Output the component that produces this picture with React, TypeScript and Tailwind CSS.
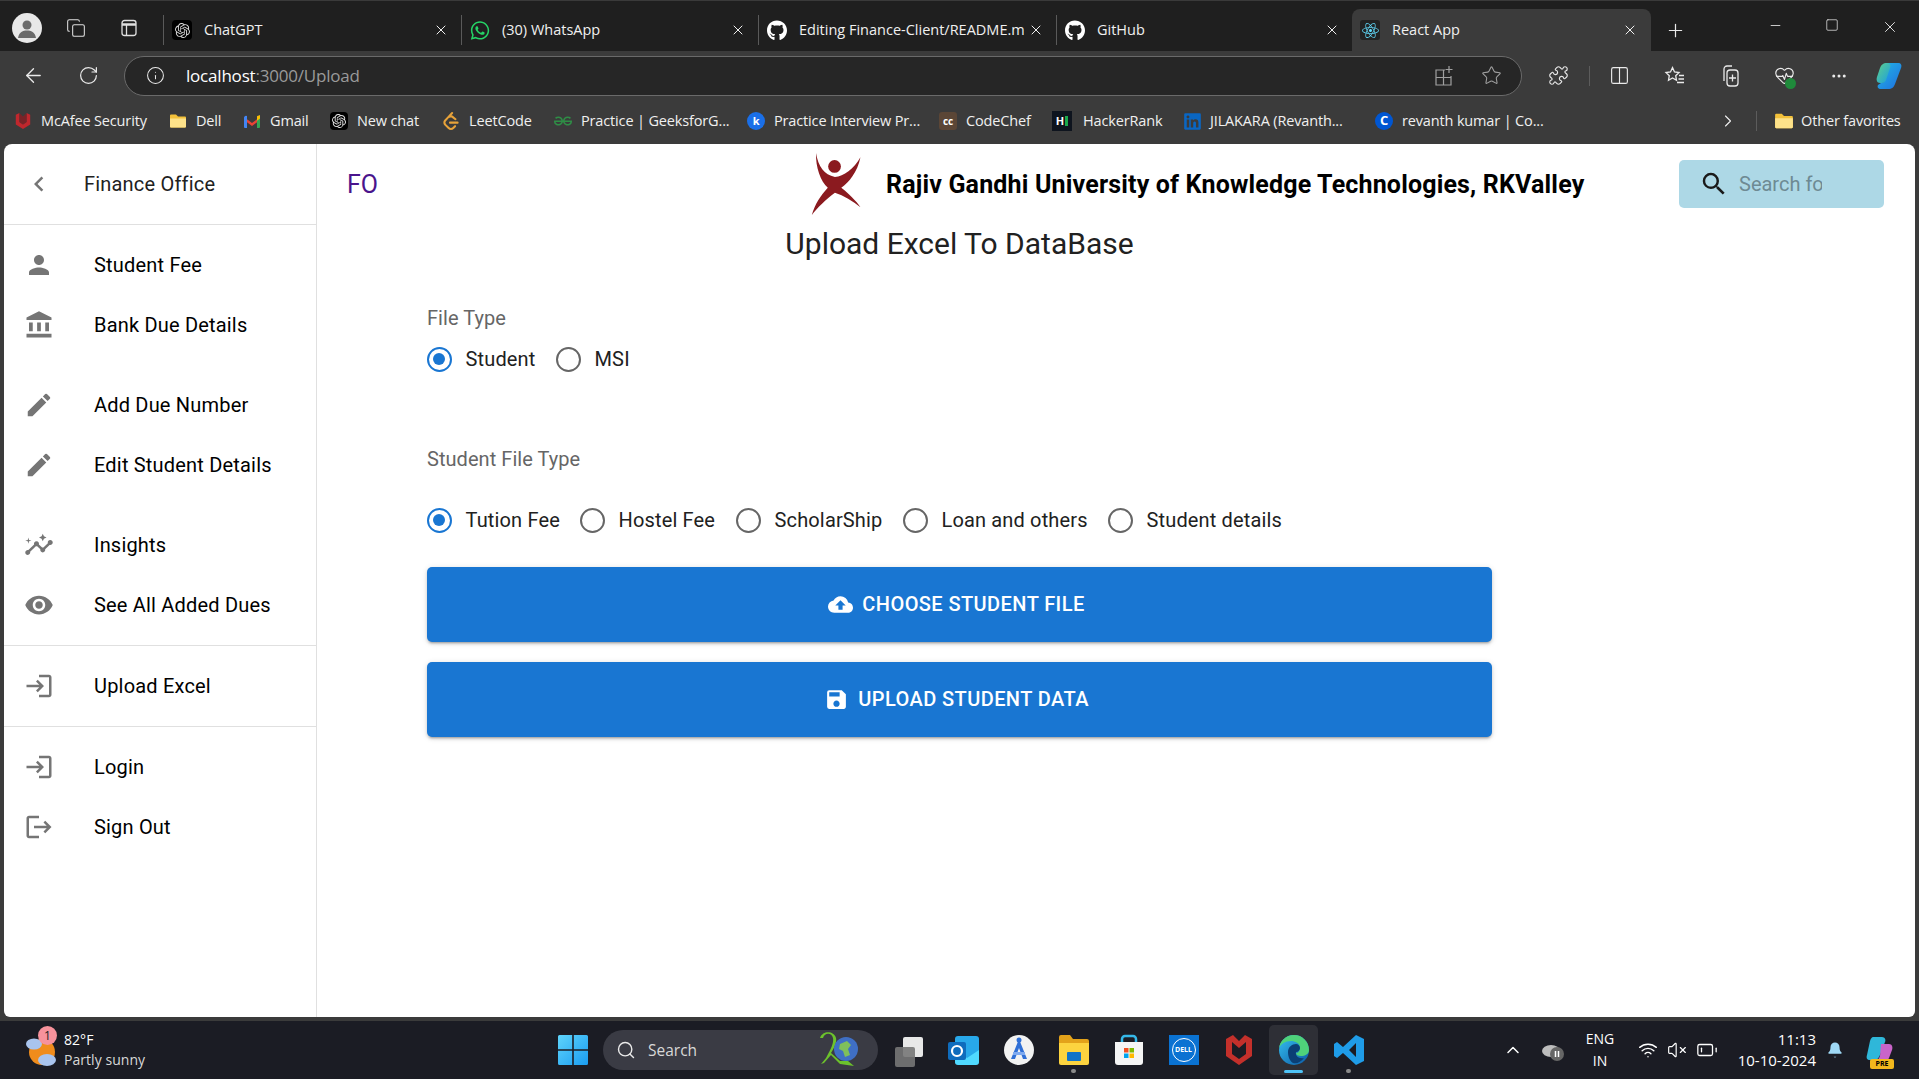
import React from "react";
import {
  MdPerson, MdAccountBalance, MdEdit, MdInsights, MdVisibility, MdLogin, MdLogout,
  MdCloudUpload, MdSave, MdSearch, MdChevronLeft,
} from "react-icons/md";
import { FaWhatsapp, FaGithub, FaReact, FaLinkedin } from "react-icons/fa";
import { SiOpenai, SiLeetcode, SiGeeksforgeeks } from "react-icons/si";
import {
  ArrowLeft, RotateCw, Info, Star, X, Plus, Minus, Square, Copy, Puzzle, Columns2, ChevronRight,
  ChevronUp, Wifi, VolumeX, BatteryLow, Bell, Search, Ellipsis, HeartPulse,
} from "lucide-react";

const chrome = "font-['Open_Sans','Noto_Sans',sans-serif]";

function Folder({ size = 18 }: { size?: number }) {
  return (
    <svg width={size} height={size} viewBox="0 0 18 18">
      <path d="M1 3.5a1 1 0 0 1 1-1h5l2 2h7a1 1 0 0 1 1 1v9a1 1 0 0 1-1 1H2a1 1 0 0 1-1-1z" fill="#f3c13a" />
      <path d="M1 6.5h16v8a1 1 0 0 1-1 1H2a1 1 0 0 1-1-1z" fill="#fde28a" />
    </svg>
  );
}

function McAfee({ size = 18 }: { size?: number }) {
  return (
    <svg width={size} height={size} viewBox="0 0 18 20">
      <path d="M1 3l4-2v10l4 3 4-3V1l4 2v11l-8 5-8-5z" fill="#c0272d" />
      <path d="M5 1l4 4 4-4v10l-4 3-4-3z" fill="#8e1c21" opacity="0.75" />
    </svg>
  );
}

function Tab({ icon, title, active, w }: { icon: React.ReactNode; title: string; active?: boolean; w: string }) {
  return (
    <div
      className={`${w} flex items-center shrink-0 pl-[8px] ${
        active ? "h-[42px] bg-[#3b3b3b] rounded-t-lg pr-[13px]" : "border-l border-l-[#5a5a5a] h-[30px] mb-[6px] pr-[12px]"
      }`}
    >
      <span className="w-[20px] h-[20px] flex items-center justify-center shrink-0">{icon}</span>
      <span className="ml-[12px] text-[14.5px] text-[#f0f0f0] flex-1 overflow-hidden whitespace-nowrap">{title}</span>
      <X size={16} strokeWidth={1.4} className="text-white shrink-0 ml-1" />
    </div>
  );
}

const bookmarks: { icon: React.ReactNode; label: string; w: string }[] = [
  { icon: <McAfee />, label: "McAfee Security", w: "w-[155px]" },
  { icon: <Folder />, label: "Dell", w: "w-[74px]" },
  { icon: <svg width="18" height="14" viewBox="0 0 18 14"><path d="M1 3l8 6 8-6v3l-8 6-8-6z" fill="#ea4335" /><path d="M1 3.500a2 2 0 0 1 3-1.500v12H2a1 1 0 0 1-1-1z" fill="#4285f4" /><path d="M14 2a2 2 0 0 1 3 1.500V13a1 1 0 0 1-1 1h-2z" fill="#34a853" /><path d="M14 2.200 17 1v3.500L14 6.700z" fill="#fbbc04" /></svg>, label: "Gmail", w: "w-[87px]" },
  { icon: <span className="w-[18px] h-[18px] bg-black rounded-[4px] flex items-center justify-center"><SiOpenai size={14} color="#e5e5e5" /></span>, label: "New chat", w: "w-[112px]" },
  { icon: <SiLeetcode size={18} color="#e8a33a" />, label: "LeetCode", w: "w-[112px]" },
  { icon: <SiGeeksforgeeks size={18} color="#2f8d46" />, label: "Practice | GeeksforG...", w: "w-[193px]" },
  { icon: <span className="w-[18px] h-[18px] rounded-full bg-[#1a6fe8] text-white text-[11px] flex items-center justify-center font-bold">k</span>, label: "Practice Interview Pr...", w: "w-[192px]" },
  { icon: <span className="w-[18px] h-[18px] rounded-[3px] bg-[#5b4636] text-white text-[10px] flex items-center justify-center font-bold">cc</span>, label: "CodeChef", w: "w-[114px]" },
  { icon: <span className="w-[20px] h-[20px] bg-[#0e141e] text-white text-[11px] flex items-center justify-center font-bold"><span className="text-white">H</span><span className="w-[3px] h-[10px] bg-[#1ba94c] ml-[1px]" /></span>, label: "HackerRank", w: "w-[130px]" },
  { icon: <FaLinkedin size={19} color="#0a66c2" />, label: "JILAKARA (Revanth...", w: "w-[192px]" },
  { icon: <span className="w-[18px] h-[18px] rounded-full bg-[#0056d2] text-white text-[13px] flex items-center justify-center font-bold">C</span>, label: "revanth kumar | Co...", w: "w-[343px]" },
];

const navA = [
  { icon: <MdPerson />, label: "Student Fee" },
  { icon: <MdAccountBalance />, label: "Bank Due Details" },
];
const navB = [
  { icon: <MdEdit />, label: "Add Due Number" },
  { icon: <MdEdit />, label: "Edit Student Details" },
];
const navC = [
  { icon: <MdInsights />, label: "Insights" },
  { icon: <MdVisibility />, label: "See All Added Dues" },
];

function NavItem({ icon, label }: { icon: React.ReactNode; label: string }) {
  return (
    <div className="h-[60px] flex items-center">
      <span className="w-[90px] pl-[20px] text-[30px] text-[#757575] flex shrink-0">{icon}</span>
      <span className="text-[20px] tracking-[0.19px] text-black">{label}</span>
    </div>
  );
}

function Radio({ label, checked, w }: { label: string; checked?: boolean; w: string }) {
  return (
    <label className={`${w} flex items-center h-[50px] shrink-0`}>
      <span
        className={`w-[25px] h-[25px] rounded-full border-[2.5px] flex items-center justify-center shrink-0 ml-[-0.5px] ${
          checked ? "border-[#1976d2]" : "border-[#666666]"
        }`}
      >
        {checked && <span className="w-[12.5px] h-[12.5px] rounded-full bg-[#1976d2]" />}
      </span>
      <span className="ml-[14px] text-[20px] tracking-[0.15px] text-[#212121]">{label}</span>
    </label>
  );
}

function BigButton({ icon, label }: { icon: React.ReactNode; label: string }) {
  return (
    <button className="w-[1065px] h-[75px] pr-[6px] rounded-[5px] bg-[#1976d2] text-white flex items-center justify-center text-[20px] font-medium tracking-[0.42px] uppercase shadow-[0_3px_2px_-2px_rgba(0,0,0,0.2),0_2px_3px_0_rgba(0,0,0,0.14),0_1px_6px_0_rgba(0,0,0,0.12)]">
      <span className="text-[25px] mr-[9px] flex">{icon}</span>
      <span className="mb-[1px]">{label}</span>
    </button>
  );
}

function TaskIcon({ children, active, dot }: { children: React.ReactNode; active?: boolean; dot?: boolean }) {
  return (
    <div className={`relative w-[49px] h-[50px] mx-[3px] flex items-center justify-center shrink-0 rounded-[5px] ${active ? "bg-[#2e2f36]" : ""}`}>
      {children}
      {active && <span className="absolute bottom-[2px] left-[15px] w-[19px] h-[3px] rounded bg-[#4fc3f7]" />}
      {dot && <span className="absolute bottom-[2px] left-[22px] w-[5px] h-[4px] rounded bg-[#8a8a8a]" />}
    </div>
  );
}

export default function App() {
  return (
    <div className="w-[1919px] h-[1079px] overflow-hidden flex flex-col bg-[#3b3b3b] font-['Roboto',sans-serif]">
      {/* tab strip */}
      <div className={`${chrome} h-[51px] shrink-0 bg-[#1f1f1f] border-t border-t-[#3a3a3a] flex items-end`}>
        <div className="w-[163px] h-[42px] flex items-center pb-[5px] shrink-0">
          <span className="ml-[12px] w-[30px] h-[30px] rounded-full bg-[#e8e8e8] flex items-center justify-center overflow-hidden">
            <svg width="22" height="22" viewBox="0 0 22 22"><circle cx="11" cy="8" r="4.5" fill="#6b6b6b" /><path d="M2 21c1-6 5-7.5 9-7.5s8 1.500 9 7.500z" fill="#6b6b6b" /></svg>
          </span>
          <span className="ml-[24px] text-[#e0e0e0] flex">
            <Copy size={20} strokeWidth={1.25} />
          </span>
          <span className="ml-[33px] text-[#e0e0e0] flex">
            <svg width="20" height="20" viewBox="0 0 20 20" fill="none" stroke="currentColor" strokeWidth="1.3"><rect x="3" y="2.500" width="14" height="15" rx="2.500" /><path d="M3 6.500h14" strokeWidth="2.500" /><path d="M7.500 6.500v11" /></svg>
          </span>
        </div>
        <Tab w="w-[298px]" title="ChatGPT" icon={<span className="w-[20px] h-[20px] bg-black rounded-[4px] flex items-center justify-center"><SiOpenai size={15} color="#d8d8d8" /></span>} />
        <Tab w="w-[297px]" title="(30) WhatsApp" icon={<FaWhatsapp size={21} color="#25d366" />} />
        <Tab w="w-[298px]" title="Editing Finance-Client/README.m" icon={<FaGithub size={21} color="#fff" />} />
        <Tab w="w-[296px]" title="GitHub" icon={<FaGithub size={21} color="#fff" />} />
        <Tab w="w-[299px]" active title="React App" icon={<span className="w-[20px] h-[20px] bg-[#222] rounded-[3px] flex items-center justify-center"><FaReact size={17} color="#61dafb" /></span>} />
        <div className="h-[42px] flex items-center ml-[14px] shrink-0">
          <Plus size={21} strokeWidth={1.4} className="text-[#eaeaea]" />
        </div>
        <div className="flex-1 h-full flex items-start justify-end pt-[17px] pr-[20px] gap-[42px] text-[#e0e0e0]">
          <Minus size={15} strokeWidth={1.4} />
          <Square size={14} strokeWidth={1.3} />
          <X size={18} strokeWidth={1.3} />
        </div>
      </div>

      {/* toolbar */}
      <div className={`${chrome} h-[49px] shrink-0 flex items-center text-[#eaeaea]`}>
        <ArrowLeft size={23} strokeWidth={1.4} className="ml-[22px]" />
        <RotateCw size={21} strokeWidth={1.4} className="ml-[33px]" />
        <div className="ml-[25px] w-[1398px] h-[40px] rounded-full bg-[#262626] border border-[#6a6a6a] flex items-center">
          <Info size={19} strokeWidth={1.3} className="ml-[21px]" />
          <span className="ml-[21px] text-[17px] tracking-[-0.2px]">
            <span className="text-white">localhost</span>
            <span className="text-[#9a9a9a]">:3000/Upload</span>
          </span>
          <span className="ml-auto flex items-center text-[#a0a0a0]">
            <svg width="20" height="22" viewBox="0 0 20 22" fill="none" stroke="currentColor" strokeWidth="1.2"><path d="M11 5H2v15h15v-9M9.500 5v15M2 12.500h15" /><path d="M15 1v7M11.500 4.500h7" /></svg>
            <Star size={21} strokeWidth={1.2} className="ml-[27px] mr-[19px]" />
          </span>
        </div>
        <Puzzle size={21} strokeWidth={1.3} className="ml-[26px]" />
        <span className="ml-[20px] w-px h-[20px] bg-[#5c5c5c]" />
        <Columns2 size={21} strokeWidth={1.3} className="ml-[19px]" />
        <svg width="22" height="22" viewBox="0 0 22 22" fill="none" stroke="currentColor" strokeWidth="1.3" className="ml-[34px]">
          <path d="M8.500 2.500l2 4.500 4.500.5-3.300 3.200.8 4.600-4-2.300-4 2.300.8-4.600L2 7.500l4.500-.5z" />
          <path d="M15 10.500h5M14.500 14h5.500M13 17.500h7" />
        </svg>
        <svg width="22" height="24" viewBox="0 0 22 24" fill="none" stroke="currentColor" strokeWidth="1.3" className="ml-[33px]">
          <path d="M5 17V5a3 3 0 0 1 3-3h5" />
          <rect x="8" y="6" width="11" height="16" rx="3" />
          <path d="M13.500 10.500v7M10 14h7" />
        </svg>
        <span className="relative ml-[33px] flex">
          <HeartPulse size={21} strokeWidth={1.3} />
          <span className="absolute right-[-1px] bottom-[-3px] w-[11px] h-[11px] rounded-full bg-[#1f8a3b]" />
        </span>
        <Ellipsis size={18} strokeWidth={2} className="ml-[35px]" />
        <span className="ml-[27px] flex">
          <svg width="30" height="30" viewBox="0 0 30 30">
            <defs>
              <linearGradient id="cp1" x1="0" y1="0" x2="1" y2="1"><stop offset="0" stopColor="#22b8e6" /><stop offset="1" stopColor="#1f6fe0" /></linearGradient>
              <linearGradient id="cp2" x1="0" y1="0" x2="1" y2="1"><stop offset="0" stopColor="#5fd18a" /><stop offset="1" stopColor="#1b9ee0" /></linearGradient>
            </defs>
            <path d="M12 2h11c3 0 4 2 3 5l-6 16c-1 3-3 5-7 5H6c-3 0-4-2-3-4l3-2c2 0 3-1 4-3l4-12c0-3-1-5-2-5z" fill="url(#cp1)" />
            <path d="M12 2C8 2 6 4 5 7l-3 9c-1 3 0 6 3 6h2c2 0 3-1 4-3l4-12c1-3 0-5-3-5z" fill="url(#cp2)" />
          </svg>
        </span>
      </div>

      {/* favourites */}
      <div className={`${chrome} h-[44px] shrink-0 flex items-center pb-[2px] pl-[13px] text-[14.5px] text-[#f0f0f0] tracking-[-0.15px]`}>
        {bookmarks.map((b) => (
          <div key={b.label} className={`${b.w} flex items-center shrink-0 whitespace-nowrap`}>
            <span className="w-[20px] flex justify-center shrink-0">{b.icon}</span>
            <span className={b.label === "HackerRank" ? "ml-[11px]" : "ml-[8px]"}>{b.label}</span>
          </div>
        ))}
        <ChevronRight size={20} strokeWidth={1.3} className="shrink-0 ml-[1px]" />
        <span className="ml-[18px] w-px h-[20px] bg-[#5c5c5c] shrink-0" />
        <span className="ml-[17px] flex shrink-0"><Folder size={20} /></span>
        <span className="ml-[7px] whitespace-nowrap">Other favorites</span>
      </div>

      {/* page */}
      <div className="flex-1 min-h-0 px-[4px] pb-[4px]">
        <div className="h-full bg-white rounded-t-lg rounded-b-md flex overflow-hidden">
          <aside className="w-[313px] shrink-0 border-r border-r-[#e0e0e0] flex flex-col">
            <div className="h-[81px] flex items-center border-b border-b-[#e0e0e0]">
              <span className="w-[80px] pl-[20px] text-[30px] text-[#757575] flex shrink-0"><MdChevronLeft /></span>
              <span className="text-[20px] tracking-[0.19px] text-[#212121]">Finance Office</span>
            </div>
            <div className="pt-[10px] pb-[10px]">
              {navA.map((n) => <NavItem key={n.label} {...n} />)}
              <div className="h-[20px]" />
              {navB.map((n) => <NavItem key={n.label} {...n} />)}
              <div className="h-[20px]" />
              {navC.map((n) => <NavItem key={n.label} {...n} />)}
            </div>
            <div className="border-t border-t-[#e0e0e0] py-[10px]">
              <NavItem icon={<MdLogin />} label="Upload Excel" />
            </div>
            <div className="border-t border-t-[#e0e0e0] pt-[10px]">
              <NavItem icon={<MdLogin />} label="Login" />
              <NavItem icon={<MdLogout />} label="Sign Out" />
            </div>
          </aside>

          <main className="flex-1 flex flex-col min-w-0">
            <header className="h-[80px] pt-[2px] flex items-center shrink-0">
              <span className="w-[492px] pl-[30px] text-[25px] text-[#4a148c] shrink-0">FO</span>
              <span className="w-[77px] shrink-0 flex mb-[3px]">
                <svg width="55" height="70" viewBox="92 20 155 195" className="block">
                  <circle cx="164" cy="68" r="18" fill="#8b1a1f" />
                  <path d="M112 30C118 70 135 90 165 98C190 95 218 75 237 42C228 85 205 112 183 128C205 145 225 165 237 183C215 165 190 150 165 142C140 160 115 185 100 205C108 175 125 150 145 128C125 110 110 70 112 30Z" fill="#8b1a1f" />
                </svg>
              </span>
              <span className="w-[793px] shrink-0 text-[25px] tracking-[0.17px] font-bold text-black whitespace-nowrap">
                Rajiv Gandhi University of Knowledge Technologies, RKValley
              </span>
              <div className="w-[205px] h-[48px] mb-[2px] rounded-[5px] bg-[#add8e6] flex items-center shrink-0 overflow-hidden">
                <MdSearch className="text-[30px] text-[#1a1a1a] ml-[20px] shrink-0" />
                <span className="ml-[10px] w-[83px] overflow-hidden whitespace-nowrap text-[20px] text-[#6e8a93]">Search for</span>
              </div>
            </header>
            <h1 className="h-[40px] leading-[40px] text-[30px] text-[#212121] text-center w-[1285px] shrink-0">
              Upload Excel To DataBase
            </h1>
            <section className="pl-[110px] flex flex-col">
              <p className="mt-[40px] h-[28px] leading-[28px] text-[20px] tracking-[0.05px] text-[#666666]">File Type</p>
              <div className="mt-[2px] flex">
                <Radio w="w-[129px]" label="Student" checked />
                <Radio w="w-[120px]" label="MSI" />
              </div>
              <p className="mt-[61px] h-[28px] leading-[28px] text-[20px] tracking-[0.05px] text-[#666666]">Student File Type</p>
              <div className="mt-[22px] flex">
                <Radio w="w-[153px]" label="Tution Fee" checked />
                <Radio w="w-[156px]" label="Hostel Fee" />
                <Radio w="w-[167px]" label="ScholarShip" />
                <Radio w="w-[205px]" label="Loan and others" />
                <Radio w="w-[200px]" label="Student details" />
              </div>
              <div className="mt-[22px] flex flex-col gap-[20px]">
                <BigButton icon={<MdCloudUpload />} label="Choose Student File" />
                <BigButton icon={<MdSave />} label="Upload Student Data" />
              </div>
            </section>
          </main>
        </div>
      </div>

      {/* taskbar */}
      <div className={`${chrome} h-[58px] shrink-0 bg-[#1b1c24] flex items-center text-white`}>
        <div className="w-[558px] shrink-0 flex items-center pl-[25px]">
          <span className="relative w-[34px] h-[40px] shrink-0">
            <svg width="34" height="40" viewBox="0 0 34 40">
              <circle cx="17" cy="22" r="13" fill="#f08c1c" />
              <ellipse cx="9" cy="14" rx="8" ry="5.500" fill="#a9c4ee" />
              <ellipse cx="22" cy="30" rx="9" ry="6" fill="#a9c4ee" />
            </svg>
            <span className="absolute left-[13px] top-[-4px] w-[19px] h-[19px] rounded-full bg-[#f7929c] text-[#222] text-[12px] flex items-center justify-center">1</span>
          </span>
          <div className="ml-[5px] flex flex-col text-[14px] leading-[20px] tracking-[0.05px]">
            <span>82°F</span>
            <span className="text-[#d8d8d8]">Partly sunny</span>
          </div>
        </div>
        <svg width="30" height="30" viewBox="0 0 30 30" className="shrink-0">
          <defs>
            <linearGradient id="wn" x1="0" y1="0" x2="1" y2="1"><stop offset="0" stopColor="#5fd4fb" /><stop offset="1" stopColor="#1a9cf0" /></linearGradient>
          </defs>
          <path d="M0 1.500A1.500 1.500 0 0 1 1.500 0H14.200V14.200H0zM15.800 0H28.500A1.500 1.500 0 0 1 30 1.500V14.200H15.800zM0 15.800H14.200V30H1.500A1.500 1.500 0 0 1 0 28.500zM15.800 15.800H30V28.500A1.500 1.500 0 0 1 28.500 30H15.800z" fill="url(#wn)" />
        </svg>
        <div className="ml-[15px] w-[275px] h-[40px] rounded-full bg-[#3a3b44] flex items-center shrink-0 relative">
          <Search size={20} strokeWidth={1.7} className="ml-[13px] text-[#eaeaea]" />
          <span className="ml-[12px] text-[15.5px] text-[#d8d8d8] mt-[1px]">Search</span>
          <svg width="46" height="36" viewBox="0 0 46 36" className="absolute right-[14px] top-[2px]">
            <path d="M5 6c2-6 9-5 10 0 1 6-3 12-7 20l-5 6 3-1 7-8 9 9 14 2-6-5H22l-9-8c3-5 6-10 5-15C16-1 5-2 2 6z" fill="#6cc22c" />
            <circle cx="28" cy="17" r="12" fill="#3f6fc4" />
            <path d="M22 12l7-3 4 4-3 4 2 6-5 2-2-6-4-2z" fill="#7fbf5a" />
          </svg>
        </div>
        <div className="ml-[3px] flex shrink-0 items-center">
          <TaskIcon>
            <svg width="32" height="34" viewBox="0 0 32 34"><rect x="10" y="4" width="20" height="20" rx="2" fill="#e8e8e8" /><rect x="2" y="14" width="20" height="20" rx="2" fill="#777" fillOpacity="0.9" /></svg>
          </TaskIcon>
          <TaskIcon>
            <svg width="34" height="32" viewBox="0 0 34 32"><rect x="8" y="2" width="24" height="28" rx="3" fill="#28a8ea" /><path d="M8 16l12 8 12-8v12a3 3 0 0 1-3 3H11a3 3 0 0 1-3-3z" fill="#50d9ff" /><rect x="1" y="8" width="18" height="18" rx="2" fill="#0f6cbd" /><circle cx="10" cy="17" r="5" fill="none" stroke="#fff" strokeWidth="2.200" /></svg>
          </TaskIcon>
          <TaskIcon>
            <svg width="32" height="32" viewBox="0 0 32 32"><circle cx="16" cy="16" r="15" fill="#f2f2f2" /><path d="M16 5l8 20h-4l-4-11-4 11H8z" fill="#2f6fd6" /><path d="M10 18h12v3H10z" fill="#7faaf0" /><circle cx="16" cy="6" r="2.500" fill="#2f6fd6" /></svg>
          </TaskIcon>
          <TaskIcon dot>
            <svg width="32" height="32" viewBox="0 0 32 32"><path d="M1 3a2 2 0 0 1 2-2h9l3 4h14a2 2 0 0 1 2 2v4H1z" fill="#e3a21a" /><path d="M1 9h30v20a2 2 0 0 1-2 2H3a2 2 0 0 1-2-2z" fill="#fcd33f" /><rect x="9" y="18" width="14" height="9" rx="1" fill="#1173c8" /></svg>
          </TaskIcon>
          <TaskIcon>
            <svg width="30" height="32" viewBox="0 0 30 32"><path d="M8 8V5a3 3 0 0 1 3-3h8a3 3 0 0 1 3 3v3" fill="none" stroke="#35b8e8" strokeWidth="2.500" /><path d="M1 8h28v20a3 3 0 0 1-3 3H4a3 3 0 0 1-3-3z" fill="#f5f5f5" /><rect x="10" y="14" width="4.500" height="4.500" fill="#f25022" /><rect x="15.500" y="14" width="4.500" height="4.500" fill="#7fba00" /><rect x="10" y="19.500" width="4.500" height="4.500" fill="#00a4ef" /><rect x="15.500" y="19.500" width="4.500" height="4.500" fill="#ffb900" /></svg>
          </TaskIcon>
          <TaskIcon>
            <span className="w-[30px] h-[30px] bg-[#0a72d2] flex items-center justify-center">
              <span className="w-[24px] h-[24px] rounded-full border border-white text-white text-[7px] font-bold flex items-center justify-center">DELL</span>
            </span>
          </TaskIcon>
          <TaskIcon>
            <svg width="28" height="32" viewBox="0 0 28 32"><path d="M1 5l7-4 6 6 6-6 7 4v17l-13 9-13-9zM7 8v12l7 5 7-5V8l-7 6z" fill="#c4302b" fillRule="evenodd" /></svg>
          </TaskIcon>
          <TaskIcon active>
            <svg width="32" height="32" viewBox="0 0 32 32">
              <defs>
                <linearGradient id="ed" x1="0" y1="0" x2="1" y2="1"><stop offset="0" stopColor="#35c1f1" /><stop offset="1" stopColor="#0c59a4" /></linearGradient>
              </defs>
              <circle cx="16" cy="16" r="15" fill="url(#ed)" />
              <path d="M16 1a15 15 0 0 1 15 15c0 4-4 6-8 6-3 0-5-1-5-3 2 0 4-2 4-5 0-5-5-7-9-7C7 7 3 10 1 14 2 7 8 1 16 1z" fill="#4fd27a" />
              <path d="M10 18c0-5 4-8 8-8 2 0 4 2 4 4s-2 4-4 4c-1 4 3 7 8 6-3 4-7 6-11 5-3-2-5-6-5-11z" fill="#0b3f75" />
            </svg>
          </TaskIcon>
          <TaskIcon dot>
            <svg width="32" height="32" viewBox="0 0 32 32"><path d="M23 1l8 4v22l-8 4-13-12-6 5-3-2V10l3-2 6 5zM23 9l-7 7 7 7z" fill="#1f9ce8" fillRule="evenodd" /></svg>
          </TaskIcon>
        </div>
        <div className="flex-1 flex items-center min-w-0">
          <ChevronUp size={20} strokeWidth={1.8} className="ml-[127px] shrink-0" />
          <svg width="24" height="24" viewBox="0 0 24 24" className="ml-[18px] shrink-0"><ellipse cx="10" cy="13" rx="9" ry="6" fill="#bdbdbd" /><circle cx="16" cy="16" r="7" fill="#666" /><path d="M14.500 13v6M17.500 13v6" stroke="#fff" strokeWidth="1.500" /></svg>
          <div className="ml-[15px] w-[40px] text-center text-[14px] leading-[22px] shrink-0">ENG<br />IN</div>
          <Wifi size={20} strokeWidth={1.7} className="ml-[18px] shrink-0" />
          <VolumeX size={20} strokeWidth={1.4} className="ml-[9px] shrink-0" />
          <BatteryLow size={22} strokeWidth={1.4} className="ml-[9px] shrink-0" />
          <div className="w-[98px] text-right text-[15px] leading-[21px] shrink-0 whitespace-nowrap">11:13<br />10-10-2024</div>
          <Bell size={18} fill="#9fd8f5" strokeWidth={0} className="ml-[10px] shrink-0" />
          <span className="relative ml-[20px] w-[30px] h-[30px] shrink-0">
            <svg width="30" height="30" viewBox="0 0 30 30"><path d="M9 2h9c3 0 4 3 3 5l-5 13c-1 3-3 5-6 5H6c-3 0-4-2-3-5l3-14c1-3 2-4 3-4z" fill="#2fb7d9" /><path d="M17 9h8c3 0 4 3 3 6l-3 8c-1 2-3 4-6 4h-9c3-1 5-3 6-6z" fill="#c964c9" /></svg>
            <span className="absolute left-[6px] bottom-[-4px] h-[10px] w-[24px] bg-[#f3b81d] rounded-[2px] text-black text-[7px] font-bold flex items-center justify-center">PRE</span>
          </span>
        </div>
      </div>
    </div>
  );
}
